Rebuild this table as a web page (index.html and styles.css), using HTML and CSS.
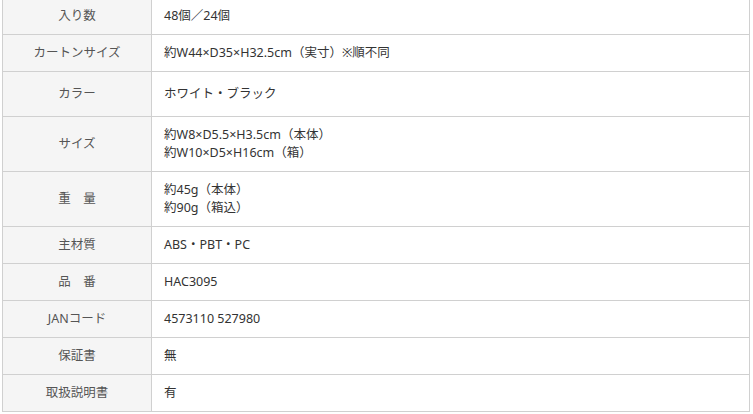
FILE: index.html
```html
<!DOCTYPE html>
<html lang="ja">
<head>
    <meta charset="UTF-8">
    <title>商品仕様</title>
    <link rel="stylesheet" href="styles.css">
</head>
<body>
    <div class="spec-wrap">
        <table class="spec-table">
            <tr>
                <th>入り数</th>
                <td>48個／24個</td>
            </tr>
            <tr>
                <th>カートンサイズ</th>
                <td>約W44×D35×H32.5cm（実寸）※順不同</td>
            </tr>
            <tr class="tall">
                <th>カラー</th>
                <td>ホワイト・ブラック</td>
            </tr>
            <tr>
                <th>サイズ</th>
                <td>約W8×D5.5×H3.5cm（本体）<br>約W10×D5×H16cm（箱）</td>
            </tr>
            <tr>
                <th>重　量</th>
                <td>約45g（本体）<br>約90g（箱込）</td>
            </tr>
            <tr>
                <th>主材質</th>
                <td>ABS・PBT・PC</td>
            </tr>
            <tr>
                <th>品　番</th>
                <td>HAC3095</td>
            </tr>
            <tr>
                <th>JANコード</th>
                <td>4573110 527980</td>
            </tr>
            <tr>
                <th>保証書</th>
                <td>無</td>
            </tr>
            <tr>
                <th>取扱説明書</th>
                <td>有</td>
            </tr>
        </table>
    </div>
</body>
</html>
```

FILE: styles.css
```css
body { margin: 0; background: #fff; font-family: "Noto Sans", "Noto Sans CJK JP", sans-serif; font-size: 12.5px; line-height: 18px; color: #333; }
.spec-wrap { padding: 0 0 0 2px; margin-top: -3px; }
.spec-table { width: 748px; border-collapse: collapse; border: 1px solid #d0d0d0; }
.spec-table th, .spec-table td { border: 1px solid #d0d0d0; padding: 9px 12px; vertical-align: middle; }
.spec-table th { width: 124px; background: #f5f5f5; color: #555; font-weight: normal; text-align: center; }
.spec-table td { text-align: left; }
.spec-table .tall th, .spec-table .tall td { padding-top: 13px; padding-bottom: 13px; }
```
